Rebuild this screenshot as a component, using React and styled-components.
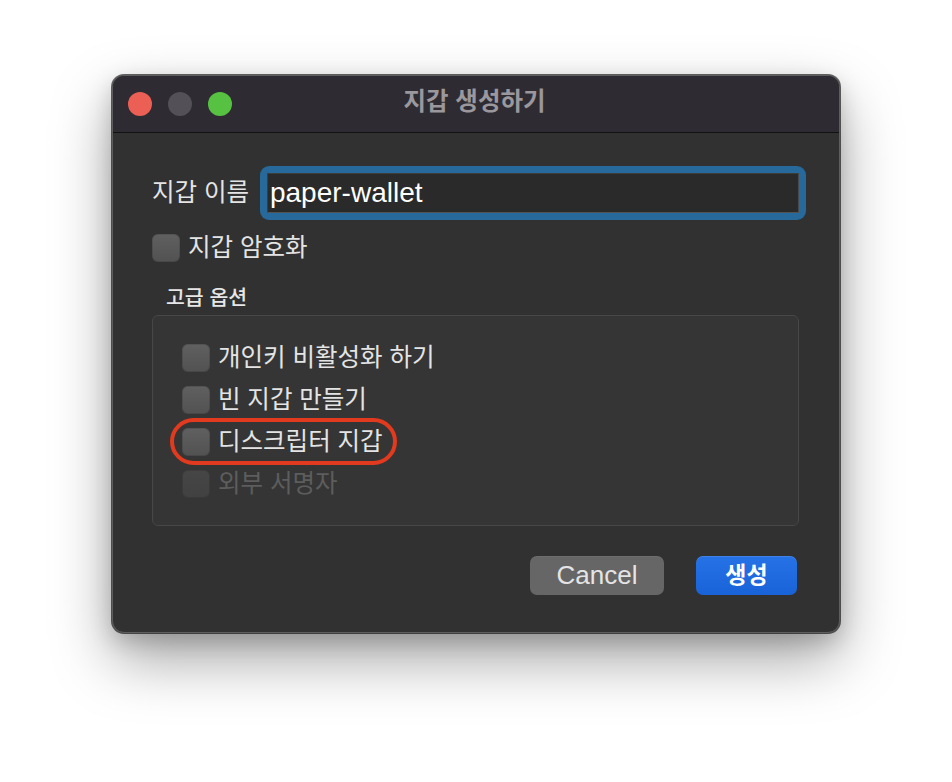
import React from "react";
import styled, { createGlobalStyle } from "styled-components";

const Global = createGlobalStyle`
  html, body { margin: 0; padding: 0; background: #ffffff; }
  body { font-family: "Liberation Sans", "Noto Sans CJK KR", sans-serif; }
  * { box-sizing: border-box; }
`;

const Stage = styled.div`
  width: 952px;
  height: 782px;
  padding: 75px 0 0 112px;
`;

const Window = styled.div`
  width: 728px;
  height: 558px;
  border-radius: 12px;
  background: #313131;
  border: 1px solid #5e5e5e;
  box-shadow: 0 0 0 1px rgba(0, 0, 0, 0.6), 0 26px 60px rgba(0, 0, 0, 0.36),
    0 8px 22px rgba(0, 0, 0, 0.18);
  overflow: hidden;
  display: flex;
  flex-direction: column;
`;

const TitleBar = styled.div`
  height: 57px;
  background: #2e2b32;
  border-bottom: 1px solid #111111;
  display: grid;
  grid-template-columns: 1fr auto 1fr;
  align-items: center;
  padding: 0 15px;
`;

const Lights = styled.div`
  display: flex;
  gap: 16px;
`;

const Light = styled.span`
  width: 24px;
  height: 24px;
  border-radius: 50%;
  background: ${(p) => p.$color};
`;

const Title = styled.div`
  font-size: 24.5px;
  font-weight: 700;
  color: #9a979d;
  line-height: 28px;
  margin-top: -4px;
  margin-right: 3px;
`;

const Body = styled.div`
  flex: 1;
  display: flex;
  flex-direction: column;
  padding: 33px 33px 0 39px;
`;

const NameRow = styled.div`
  display: flex;
  align-items: center;
  gap: 11px;
`;

const Label = styled.span`
  font-size: 24.5px;
  line-height: 28px;
  color: ${(p) => (p.$disabled ? "#5d5d5d" : "#e4e4e4")};
  white-space: nowrap;
`;

const FieldRing = styled.div`
  flex: 1;
  height: 54px;
  border-radius: 9px;
  background: #26699a;
  padding: 7px;
`;

const Field = styled.div`
  height: 40px;
  background: #2a2a2a;
  border: 1px solid #3d3d3d;
  border-bottom-color: #545454;
  border-right-color: #4a4a4a;
  font-size: 28px;
  line-height: 37px;
  color: #ffffff;
  padding-left: 2px;
`;

const CheckRow = styled.div`
  position: relative;
  display: flex;
  align-items: center;
  gap: 8px;
  height: 28px;
  margin-top: ${(p) => p.$top || 0}px;
`;

const Box = styled.span`
  width: 28px;
  height: 28px;
  flex: none;
  border-radius: 6px;
  background: ${(p) =>
    p.$disabled
      ? "linear-gradient(180deg, #464646, #414141)"
      : "linear-gradient(180deg, #606060, #525252)"};
  box-shadow: inset 0 0 0 1px rgba(0, 0, 0, 0.12);
`;

const GroupTitle = styled.div`
  margin-top: 24px;
  padding-left: 14px;
  font-size: 20.5px;
  font-weight: 500;
  line-height: 24px;
  color: #e6e6e6;
`;

const GroupBox = styled.div`
  margin-top: 5px;
  margin-right: 7px;
  height: 211px;
  border: 1px solid #474747;
  border-radius: 6px;
  background: #353535;
  padding: 28px 29px;
  display: flex;
  flex-direction: column;
  gap: 14px;
`;

const Highlight = styled.span`
  position: absolute;
  left: -12px;
  top: -10px;
  width: 227px;
  height: 47px;
  border: 4px solid #e23a1e;
  border-radius: 24px;
  pointer-events: none;
`;

const ButtonRow = styled.div`
  margin-top: 30px;
  padding-right: 9px;
  display: flex;
  justify-content: flex-end;
  gap: 32px;
`;

const Button = styled.button`
  height: 39px;
  width: ${(p) => p.$w}px;
  border: none;
  border-radius: 7px;
  font-family: "Liberation Sans", "Noto Sans CJK KR", sans-serif;
  font-size: ${(p) => (p.$primary ? 23 : 26)}px;
  font-weight: ${(p) => (p.$primary ? 700 : 400)};
  color: ${(p) => (p.$primary ? "#ffffff" : "#e4e4e4")};
  background: ${(p) =>
    p.$primary ? "linear-gradient(180deg, #2572e6, #1963d8)" : "#666666"};
  box-shadow: ${(p) =>
    p.$primary ? "inset 0 1px 0 rgba(255,255,255,0.12)" : "inset 0 1px 0 rgba(255,255,255,0.05)"};
  padding: 0;
  line-height: 39px;
`;

const options = [
  { label: "개인키 비활성화 하기" },
  { label: "빈 지갑 만들기" },
  { label: "디스크립터 지갑", marked: true },
  { label: "외부 서명자", disabled: true },
];

export default function App() {
  return (
    <>
      <Global />
      <Stage>
        <Window>
          <TitleBar>
            <Lights>
              <Light $color="#ec5f55" />
              <Light $color="#535057" />
              <Light $color="#57c142" />
            </Lights>
            <Title>지갑 생성하기</Title>
            <span />
          </TitleBar>
          <Body>
            <NameRow>
              <Label>지갑 이름</Label>
              <FieldRing>
                <Field>paper-wallet</Field>
              </FieldRing>
            </NameRow>
            <CheckRow $top={14}>
              <Box />
              <Label>지갑 암호화</Label>
            </CheckRow>
            <GroupTitle>고급 옵션</GroupTitle>
            <GroupBox>
              {options.map((o) => (
                <CheckRow key={o.label}>
                  <Box $disabled={o.disabled} />
                  <Label $disabled={o.disabled}>{o.label}</Label>
                  {o.marked && <Highlight />}
                </CheckRow>
              ))}
            </GroupBox>
            <ButtonRow>
              <Button $w={134}>Cancel</Button>
              <Button $w={101} $primary>
                생성
              </Button>
            </ButtonRow>
          </Body>
        </Window>
      </Stage>
    </>
  );
}
